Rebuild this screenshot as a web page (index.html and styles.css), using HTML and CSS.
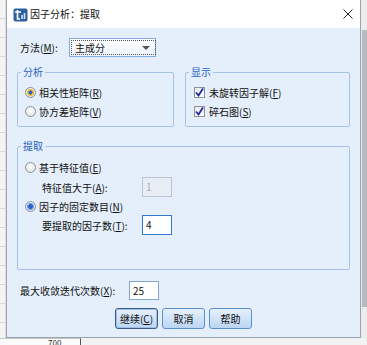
FILE: index.html
```html
<!DOCTYPE html>
<html lang="zh-CN">
<head>
  <meta charset="UTF-8">
  <meta name="viewport" content="width=device-width, initial-scale=1.0">
  <title>因子分析：提取</title>
  <link rel="stylesheet" href="styles.css">
</head>
<body>
  <div class="desktop">
    <div class="side-left"></div>
    <div class="dialog">
      <div class="titlebar">
        <svg class="app-icon" width="15" height="14" viewBox="0 0 15 14">
          <rect x="0.5" y="0.5" width="14" height="13" rx="2" fill="#2f5f9c"/>
          <path d="M2 4 H8 M4.5 2 V11 H7" stroke="#fff" stroke-width="1.6" fill="none"/>
          <path d="M9 11 V7 M11.5 11 V5" stroke="#cfe2f7" stroke-width="1.6"/>
        </svg>
        <span class="title">因子分析：提取</span>
        <svg class="close" width="10" height="10" viewBox="0 0 10 10">
          <path d="M0.5 0.5 L9.5 9.5 M9.5 0.5 L0.5 9.5" stroke="#222" stroke-width="1"/>
        </svg>
      </div>

      <div class="dialog-body">
        <div class="method-row">
          <span class="method-label">方法(<u>M</u>):</span>
          <div class="select">
            <span class="select-text">主成分</span>
            <span class="arrow"></span>
          </div>
        </div>

        <div class="top-groups">
          <fieldset class="group">
            <legend>分析</legend>
            <div class="option"><span class="radio checked hover"></span>相关性矩阵(<u>R</u>)</div>
            <div class="option"><span class="radio"></span>协方差矩阵(<u>V</u>)</div>
          </fieldset>
          <fieldset class="group">
            <legend>显示</legend>
            <div class="option check-option">
              <span class="checkbox"><svg width="9" height="9" viewBox="0 0 9 9"><path d="M1 4.5 L3.5 7.5 L8 0.5" stroke="#1c2aa0" stroke-width="1.8" fill="none"/></svg></span>未旋转因子解(<u>F</u>)
            </div>
            <div class="option check-option">
              <span class="checkbox"><svg width="9" height="9" viewBox="0 0 9 9"><path d="M1 4.5 L3.5 7.5 L8 0.5" stroke="#1c2aa0" stroke-width="1.8" fill="none"/></svg></span>碎石图(<u>S</u>)
            </div>
          </fieldset>
        </div>

        <fieldset class="group extract">
          <legend>提取</legend>
          <div class="option row-a"><span class="radio"></span>基于特征值(<u>E</u>)</div>
          <div class="sub-row row-b">
            <span class="sub-label">特征值大于(<u>A</u>):</span>
            <span class="field disabled">1</span>
          </div>
          <div class="option row-c"><span class="radio checked"></span>因子的固定数目(<u>N</u>)</div>
          <div class="sub-row row-d">
            <span class="sub-label">要提取的因子数(<u>T</u>):</span>
            <span class="field focused">4</span>
          </div>
        </fieldset>

        <div class="iter-row">
          <span class="iter-label">最大收敛迭代次数(<u>X</u>):</span>
          <span class="field">25</span>
        </div>

        <div class="buttons">
          <button class="btn default">继续(<u>C</u>)</button>
          <button class="btn">取消</button>
          <button class="btn">帮助</button>
        </div>
      </div>
    </div>
    <div class="side-right"><div class="shadow-bar"></div></div>
  </div>
  <div class="under">
    <span class="under-num">700</span>
  </div>
</body>
</html>
```

FILE: styles.css
```css
body {
  margin: 0;
  width: 367px;
  height: 345px;
  overflow: hidden;
  background: #f2f2f2;
  font-family: "Noto Sans CJK SC", "Microsoft YaHei", sans-serif;
  font-size: 10px;
  color: #111;
}
u {
  text-underline-offset: 1px;
}
.desktop {
  display: flex;
  height: 338px;
}
.side-left {
  width: 6px;
  background-color: #f4f4f4;
  background-image: repeating-linear-gradient(to bottom, transparent 0 18px, #d6d6d6 18px 19px);
  border-right: 1px solid #e0e0e0;
  box-sizing: border-box;
}
.side-right {
  width: 6px;
  background: #ececec;
}
.shadow-bar {
  margin: 30px 0 0 1px;
  height: 277px;
  background: #b3bac2;
}

/* окно диалога */
.dialog {
  width: 355px;
  box-sizing: border-box;
  border: 1px solid #9aa3ad;
  border-top: none;
  background: #e4effb;
  display: flex;
  flex-direction: column;
}
.titlebar {
  height: 28px;
  background: #fff;
  display: flex;
  align-items: center;
  padding-left: 6px;
}
.app-icon {
  margin-top: 1px;
}
.title {
  margin-left: 2px;
  font-size: 10px;
  line-height: 14px;
}
.close {
  margin-left: auto;
  margin-right: 7px;
}
.dialog-body {
  padding: 10px 10px 8px 10px;
}

.method-row {
  display: flex;
  align-items: center;
  height: 19px;
}
.method-label {
  width: 52px;
  padding-left: 3px;
  box-sizing: border-box;
}
.select {
  width: 87px;
  height: 19px;
  box-sizing: border-box;
  border: 1px solid #82aee3;
  background: linear-gradient(#ffffff, #edf3fb);
  display: flex;
  align-items: center;
  padding: 1px;
}
.select-text {
  flex: 1;
  height: 100%;
  box-sizing: border-box;
  border: 1px dotted #555;
  padding-left: 3px;
  line-height: 13px;
}
.arrow {
  width: 0;
  height: 0;
  border-left: 4px solid transparent;
  border-right: 4px solid transparent;
  border-top: 4px solid #555;
  margin: 0 4px 0 -14px;
}

/* группы */
.top-groups {
  display: grid;
  grid-template-columns: 157px 165px;
  column-gap: 11px;
  margin-top: 8px;
}
.group {
  margin: 0;
  padding: 4px 0 5px 0;
  border: 1px solid #a6c2e6;
  border-radius: 2px;
  min-width: 0;
}
.group legend {
  margin-left: 3px;
  padding: 0 2px;
  line-height: 14px;
  color: #2a63c6;
}
.option {
  display: flex;
  align-items: center;
  height: 19px;
  padding-left: 7px;
}
.check-option {
  padding-left: 8px;
}
.radio {
  width: 11px;
  height: 11px;
  box-sizing: border-box;
  border-radius: 50%;
  border: 1px solid #8c9199;
  background: radial-gradient(circle at 50% 40%, #ffffff, #d9dde2);
  margin-right: 3px;
  flex: none;
}
.radio.checked {
  background:
    radial-gradient(circle, #2a62c8 0 2px, #78a6e6 2.6px 3.4px, transparent 3.8px),
    radial-gradient(circle at 50% 40%, #ffffff, #d9dde2);
}
.radio.checked.hover {
  background:
    radial-gradient(circle, #2a62c8 0 1.8px, #eebd3a 2.3px 3.4px, transparent 3.8px),
    radial-gradient(circle at 50% 40%, #ffffff, #d9dde2);
}
.checkbox {
  width: 11px;
  height: 11px;
  box-sizing: border-box;
  border: 1px solid #8e9297;
  background: linear-gradient(#e9ecef, #ffffff);
  margin-right: 4px;
  display: flex;
  align-items: center;
  justify-content: center;
  flex: none;
}

.extract {
  margin-top: 12px;
  padding: 5px 0 33px 0;
}
.row-a {
  height: 18px;
}
.sub-row {
  display: flex;
  align-items: center;
  height: 22px;
  padding-left: 24px;
}
.row-c {
  height: 16px;
}
.sub-label {
  width: 100px;
}

.field {
  width: 30px;
  height: 20px;
  box-sizing: border-box;
  border: 1px solid #7fa5d6;
  background: #fff;
  padding-left: 3px;
  line-height: 18px;
}
.field.disabled {
  border-color: #bcc5cf;
  background: #e8eef6;
  color: #a8a8a8;
}
.field.focused {
  border-color: #3478d4;
}

.iter-row {
  display: flex;
  align-items: center;
  margin-top: 11px;
  height: 19px;
  padding-left: 3px;
}
.iter-label {
  width: 109px;
}
.iter-row .field {
  height: 19px;
  line-height: 17px;
}

.buttons {
  display: flex;
  justify-content: center;
  gap: 4px;
  margin-top: 8px;
}
.btn {
  width: 43px;
  height: 21px;
  padding: 0;
  border: 1px solid #5d90d2;
  border-radius: 3px;
  background: linear-gradient(#e6f0fc, #bcd6f3);
  font-family: inherit;
  font-size: 10px;
  color: #111;
}
.btn.default {
  border-color: #3b5b88;
  box-shadow: inset 0 0 0 1px #9dc0ea;
}

.under {
  height: 6px;
  background: #fbfbfb;
  border-top: 1px solid #c9c9c9;
  overflow: hidden;
  padding-left: 48px;
  width: 32px;
  border-right: 1px solid #555;
}
.under-num {
  display: block;
  font-size: 8px;
  line-height: 6px;
  padding-top: 1px;
  color: #333;
}
```
